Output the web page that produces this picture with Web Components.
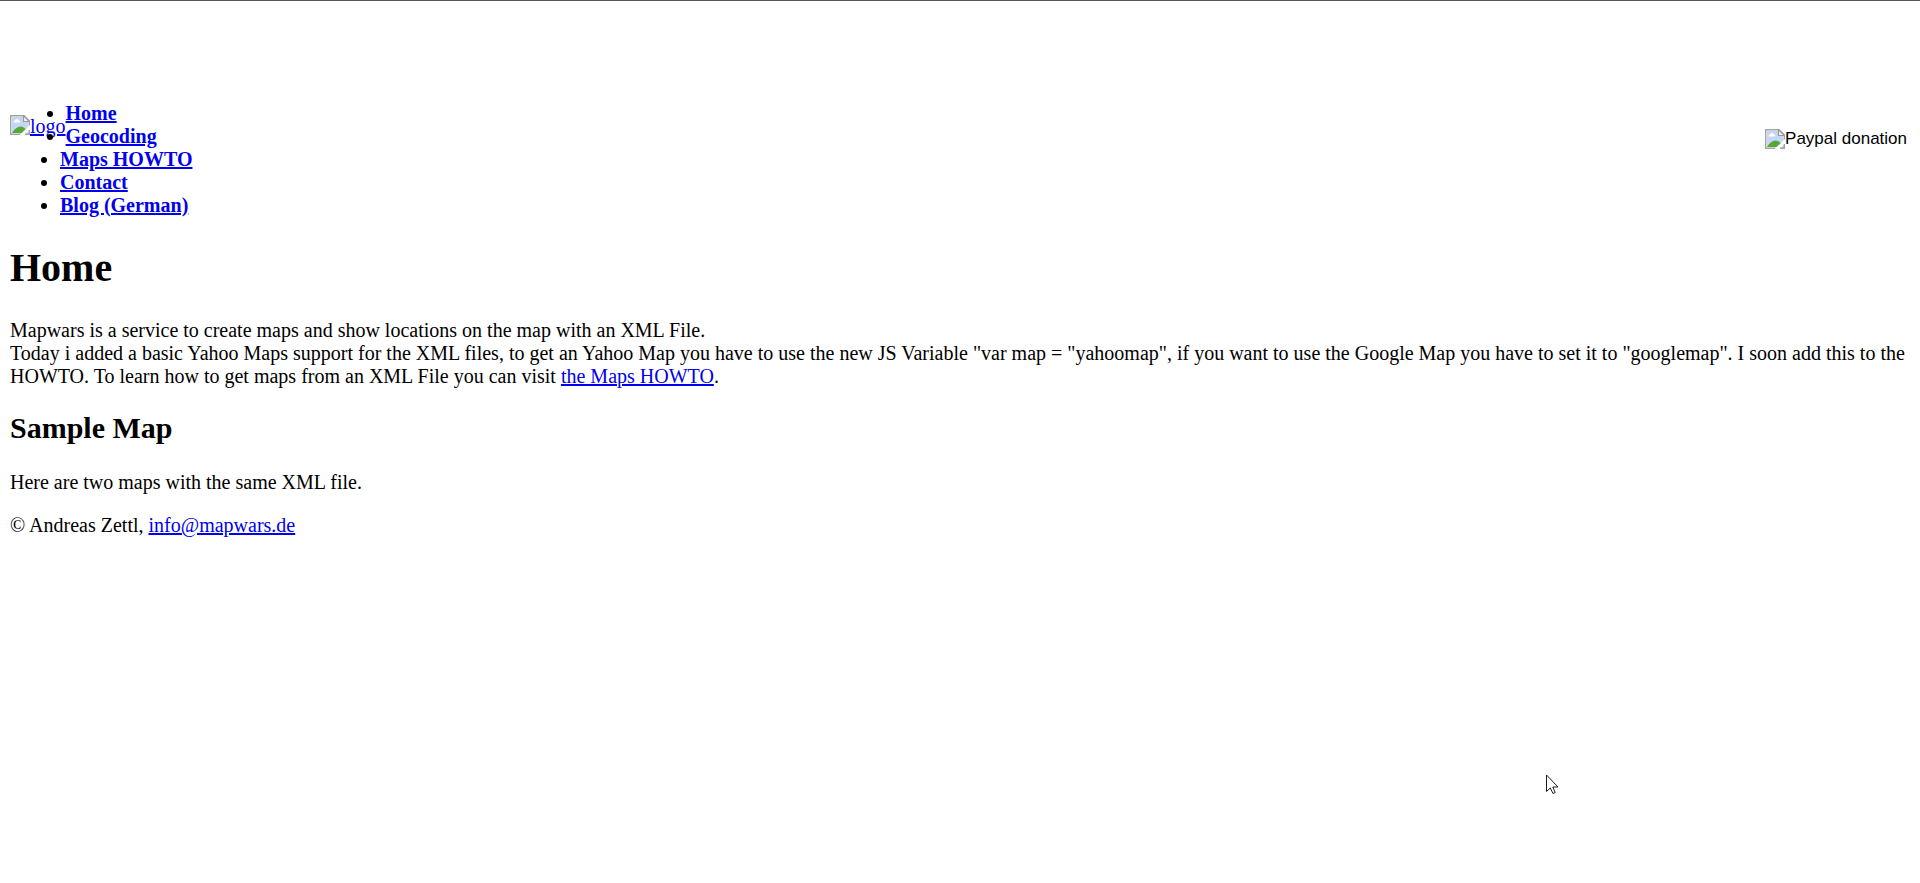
<!DOCTYPE html>
<html lang="en">
<head>
<meta charset="utf-8">
<title>Mapwars - Home</title>
<style>
  body {
    margin: 0;
    background: #fff;
    color: #000;
    font: 20px/23px "Liberation Serif", "Times New Roman", serif;
  }
</style>
</head>
<body>
<mapwars-page>
  <page-header slot="header">
    <site-logo>logo</site-logo>
    <donate-button>Paypal donation</donate-button>
    <site-nav></site-nav>
  </page-header>
  <page-section level="1" heading="Home">Mapwars is a service to create maps and show locations on the map with an XML File.<br>
Today i added a basic Yahoo Maps support for the XML files, to get an Yahoo Map you have to use the new JS Variable "var map = "yahoomap", if you want to use the Google Map you have to set it to "googlemap". I soon add this to the HOWTO. To learn how to get maps from an XML File you can visit <a href="#howto">the Maps HOWTO</a>.</page-section>
  <page-section level="2" heading="Sample Map">Here are two maps with the same XML file.</page-section>
  <page-footer slot="footer"></page-footer>
</mapwars-page>
<mouse-pointer></mouse-pointer>

<script>
class BaseElement extends HTMLElement {
  constructor() {
    super();
    this.attachShadow({ mode: "open" }).innerHTML = this.render();
  }
}

customElements.define("missing-image", class extends BaseElement {
  render() {
    return `
      <style>
        :host { display: inline-block; width: 20px; height: 20px; vertical-align: top; }
        svg { display: block; }
      </style>
      <svg width="20" height="20" viewBox="0 0 20 20" aria-hidden="true">
        <path d="M.7 .7H14L19.300 6V19.300H.7Z" fill="#fff" stroke="#a3a3a3" stroke-width="1.400"/>
        <path d="M2 2H13V7H18V18H2Z" fill="#c5d6f7"/>
        <path d="M3.500 7.500C3.500 5.500 5.300 5.800 5.800 4.500C7 3.300 8.500 4.300 8.700 5.500C10.300 5.300 10.700 7 9.800 7.500Z" fill="#fff"/>
        <path d="M2 18C4.500 14 7.500 11.500 10.500 11.500C13 11.500 14.800 13 16 15V18Z" fill="#55a936"/>
        <path d="M13.500 .7V6.500H19.300Z" fill="#f5f5f5" stroke="#999" stroke-width="1.200"/>
        <path d="M9.500 20L20 10V14.500L14.500 20Z" fill="#fff"/>
        <path d="M19.300 15V19.300H15" fill="none" stroke="#a3a3a3" stroke-width="1.400"/>
      </svg>`;
  }
});

customElements.define("site-logo", class extends BaseElement {
  render() {
    return `
      <style>
        :host { display: block; float: left; margin-top: 13px; }
        a { display: flex; color: #0000ee; }
      </style>
      <a href="#home"><missing-image></missing-image><slot></slot></a>`;
  }
});

customElements.define("donate-button", class extends BaseElement {
  render() {
    return `
      <style>
        :host { display: block; float: right; margin: 27px 3px 0 0; }
        button {
          display: flex; padding: 0; border: 0; background: none; color: #000;
          font: 17px/20px "Liberation Sans", Arial, sans-serif; cursor: pointer;
        }
      </style>
      <button type="button"><missing-image></missing-image><slot></slot></button>`;
  }
});

customElements.define("site-nav", class extends BaseElement {
  render() {
    return `
      <style>
        :host { display: block; font-weight: bold; }
        ul { margin: 0; padding: 0 0 0 50px; list-style: disc; }
        a { color: #0000ee; }
      </style>
      <nav><ul>
        <li><a href="#home">Home</a></li>
        <li><a href="#geocoding">Geocoding</a></li>
        <li><a href="#howto">Maps HOWTO</a></li>
        <li><a href="#contact">Contact</a></li>
        <li><a href="#blog">Blog (German)</a></li>
      </ul></nav>`;
  }
});

customElements.define("page-header", class extends BaseElement {
  render() {
    return `
      <style>:host { display: block; padding-top: 101px; }</style>
      <header><slot></slot></header>`;
  }
});

customElements.define("page-section", class extends BaseElement {
  render() {
    const level = this.getAttribute("level");
    return `
      <style>
        :host { display: block; }
        h1 { margin: 28px 0; font-size: 40px; line-height: 46px; }
        h2 { margin: 22px 0 26px; font-size: 30px; line-height: 35px; }
        p { margin: 0; }
        ::slotted(a) { color: #0000ee; }
      </style>
      <section><h${level}>${this.getAttribute("heading")}</h${level}><p><slot></slot></p></section>`;
  }
});

customElements.define("page-footer", class extends BaseElement {
  render() {
    return `
      <style>
        :host { display: block; margin-top: 20px; }
        a { color: #0000ee; }
      </style>
      <footer>© Andreas Zettl, <a href="mailto:info@mapwars.de">info@mapwars.de</a></footer>`;
  }
});

customElements.define("mapwars-page", class extends BaseElement {
  render() {
    return `
      <style>:host { display: block; padding: 0 10px; border-top: 1px solid #555; }</style>
      <slot name="header"></slot>
      <main><slot></slot></main>
      <slot name="footer"></slot>`;
  }
});

customElements.define("mouse-pointer", class extends BaseElement {
  render() {
    return `
      <style>
        :host { position: absolute; left: 1546px; top: 774px; pointer-events: none; }
        svg { display: block; }
      </style>
      <svg width="13" height="21" viewBox="0 0 13 21" aria-hidden="true">
        <path d="M.5 1V17.500L4.300 14L7 19.500L9.200 18.500L6.800 13H12Z" fill="#fff" stroke="#1c1c28"/>
      </svg>`;
  }
});
</script>
</body>
</html>
